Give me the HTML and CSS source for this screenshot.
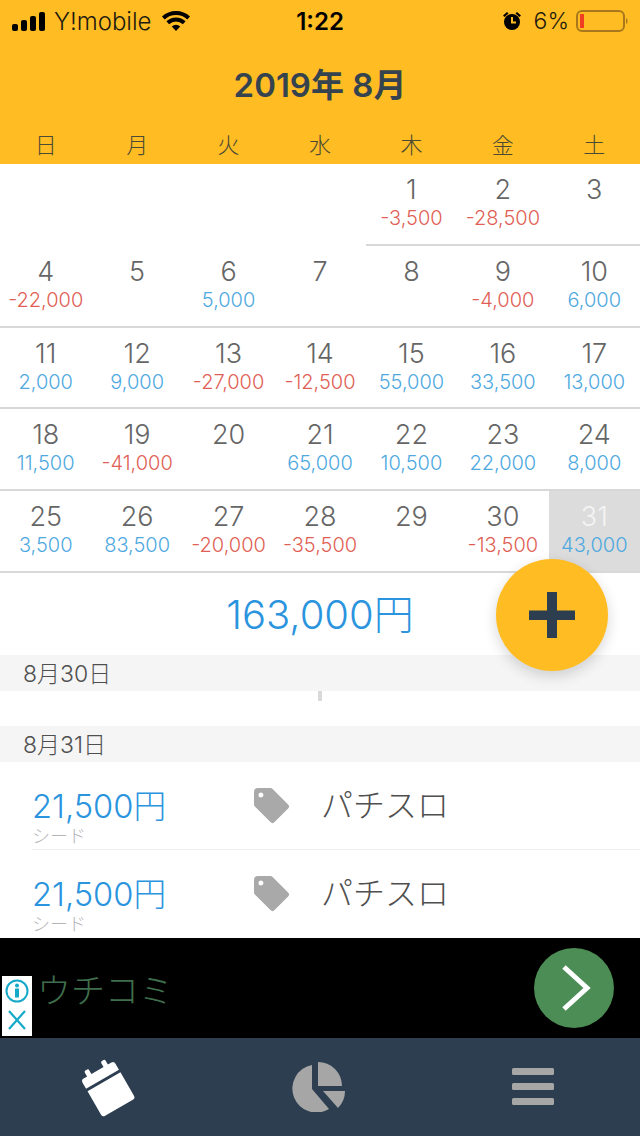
FILE: index.html
```html
<!DOCTYPE html>
<html lang="ja">
<head>
<meta charset="utf-8">
<title>Calendar</title>
<link rel="stylesheet" href="styles.css">
</head>
<body>
<div class="app">
  <header class="top">
    <div class="status">
      <div class="status-left">
        <svg class="signal" width="36" height="20" viewBox="0 0 36 20"><rect x="0" y="13" width="6" height="7" rx="2"/><rect x="9" y="9" width="6" height="11" rx="2"/><rect x="18" y="5" width="6" height="15" rx="2"/><rect x="27" y="1" width="6" height="19" rx="2"/></svg>
        <span class="carrier">Y!mobile</span>
        <svg class="wifi" width="28" height="20" viewBox="0 0 28 20"><path d="M14 20l-4.200-4.600a6 6 0 0 1 8.400 0z"/><path d="M14 6.500a14 14 0 0 1 9.600 3.800l-2.700 3a10 10 0 0 0-13.800 0l-2.700-3A14 14 0 0 1 14 6.500z"/><path d="M14 0a20.500 20.500 0 0 1 14 5.500l-2.700 3a16.500 16.500 0 0 0-22.600 0L0 5.500A20.500 20.500 0 0 1 14 0z"/></svg>
      </div>
      <div class="clock">1:22</div>
      <div class="status-right">
        <svg class="alarm" width="20" height="20" viewBox="0 0 20 20"><circle cx="10" cy="11" r="8"/><path d="M1 4.500L5 1l1.500 1.500-4 3.500zM19 4.500L15 1l-1.500 1.500 4 3.500z"/><path d="M10 6v5.500h4" fill="none" stroke="#ffbc23" stroke-width="2"/></svg>
        <span class="pct">6%</span>
        <svg class="battery" width="52" height="26" viewBox="0 0 52 26"><rect x="1" y="3" width="47" height="20" rx="5" fill="none" stroke="#a9781d" stroke-width="2"/><rect x="4" y="6" width="4" height="14" fill="#ef3e24"/><path d="M50 10c2 .5 2 5.500 0 6z" fill="#a9781d"/></svg>
      </div>
    </div>
    <h1 class="month">2019年 8月</h1>
    <div class="weekdays">
      <span>日</span><span>月</span><span>火</span><span>水</span><span>木</span><span>金</span><span>土</span>
    </div>
  </header>

  <section class="calendar">
    <div class="week first">
      <div class="day"></div><div class="day"></div><div class="day"></div><div class="day"></div>
      <div class="day ruled"><b>1</b><i class="neg">-3,500</i></div>
      <div class="day ruled"><b>2</b><i class="neg">-28,500</i></div>
      <div class="day ruled"><b>3</b></div>
    </div>
    <div class="week">
      <div class="day"><b>4</b><i class="neg">-22,000</i></div>
      <div class="day"><b>5</b></div>
      <div class="day"><b>6</b><i class="pos">5,000</i></div>
      <div class="day"><b>7</b></div>
      <div class="day"><b>8</b></div>
      <div class="day"><b>9</b><i class="neg">-4,000</i></div>
      <div class="day"><b>10</b><i class="pos">6,000</i></div>
    </div>
    <div class="week">
      <div class="day"><b>11</b><i class="pos">2,000</i></div>
      <div class="day"><b>12</b><i class="pos">9,000</i></div>
      <div class="day"><b>13</b><i class="neg">-27,000</i></div>
      <div class="day"><b>14</b><i class="neg">-12,500</i></div>
      <div class="day"><b>15</b><i class="pos">55,000</i></div>
      <div class="day"><b>16</b><i class="pos">33,500</i></div>
      <div class="day"><b>17</b><i class="pos">13,000</i></div>
    </div>
    <div class="week">
      <div class="day"><b>18</b><i class="pos">11,500</i></div>
      <div class="day"><b>19</b><i class="neg">-41,000</i></div>
      <div class="day"><b>20</b></div>
      <div class="day"><b>21</b><i class="pos">65,000</i></div>
      <div class="day"><b>22</b><i class="pos">10,500</i></div>
      <div class="day"><b>23</b><i class="pos">22,000</i></div>
      <div class="day"><b>24</b><i class="pos">8,000</i></div>
    </div>
    <div class="week">
      <div class="day"><b>25</b><i class="pos">3,500</i></div>
      <div class="day"><b>26</b><i class="pos">83,500</i></div>
      <div class="day"><b>27</b><i class="neg">-20,000</i></div>
      <div class="day"><b>28</b><i class="neg">-35,500</i></div>
      <div class="day"><b>29</b></div>
      <div class="day"><b>30</b><i class="neg">-13,500</i></div>
      <div class="day selected"><b>31</b><i class="pos">43,000</i></div>
    </div>
  </section>

  <div class="total">163,000円</div>
  <button class="fab" type="button" aria-label="add">
    <svg width="46" height="46" viewBox="0 0 46 46"><path d="M18 0h10v18.500H46v9.500H28V46H18V28H0v-9.500h18z"/></svg>
  </button>

  <div class="date-head">8月30日</div>
  <div class="empty-day"><span class="tick"></span></div>
  <div class="date-head">8月31日</div>

  <div class="entries">
    <div class="entry">
      <div class="amount-col"><div class="amount">21,500円</div><div class="place">シード</div></div>
      <svg class="tag" width="36" height="36" viewBox="0 0 36 36"><path d="M4 0h12.500a3 3 0 0 1 2.100.900l15.500 15.500a3 3 0 0 1 0 4.200L20.600 34.100a3 3 0 0 1-4.200 0L.9 18.600A3 3 0 0 1 0 16.500V4a4 4 0 0 1 4-4zm3 4.500a2.500 2.500 0 1 0 0 5 2.500 2.500 0 0 0 0-5z" fill-rule="evenodd"/></svg>
      <div class="category">パチスロ</div>
    </div>
    <div class="entry">
      <div class="amount-col"><div class="amount">21,500円</div><div class="place">シード</div></div>
      <svg class="tag" width="36" height="36" viewBox="0 0 36 36"><path d="M4 0h12.500a3 3 0 0 1 2.100.900l15.500 15.500a3 3 0 0 1 0 4.200L20.600 34.100a3 3 0 0 1-4.200 0L.9 18.600A3 3 0 0 1 0 16.500V4a4 4 0 0 1 4-4zm3 4.500a2.500 2.500 0 1 0 0 5 2.500 2.500 0 0 0 0-5z" fill-rule="evenodd"/></svg>
      <div class="category">パチスロ</div>
    </div>
  </div>

  <aside class="ad">
    <div class="ad-badge">
      <svg width="24" height="30" viewBox="0 0 24 30"><circle cx="12" cy="15" r="10.500" fill="none" stroke="#16a9c8" stroke-width="2"/><rect x="10" y="12.500" width="4" height="9" fill="#16a9c8"/><circle cx="12" cy="9.500" r="2" fill="#16a9c8"/></svg>
      <svg width="24" height="28" viewBox="0 0 24 28"><path d="M4 5l16 18M20 5L4 23" fill="none" stroke="#16a9c8" stroke-width="2.200"/></svg>
    </div>
    <div class="ad-text">ウチコミ</div>
    <div class="ad-go">
      <svg width="30" height="46" viewBox="0 0 30 46"><path d="M3 2l23 21L3 44" fill="none" stroke="#fff" stroke-width="5"/></svg>
    </div>
  </aside>

  <nav class="tabbar">
    <svg class="tab-cal" width="56" height="62" viewBox="0 0 56 62"><g transform="rotate(-30 28 31)"><path d="M9 15a3 3 0 0 1 3-3h32a3 3 0 0 1 3 3v7H9z" fill="#fff"/><rect x="16" y="6" width="5" height="9" rx="1.500" fill="#fff"/><rect x="35" y="6" width="5" height="9" rx="1.500" fill="#fff"/><path d="M9 25h38v27a3 3 0 0 1-3 3H12a3 3 0 0 1-3-3z" fill="#fff"/></g></svg>
    <svg class="tab-pie" width="54" height="50" viewBox="0 0 54 50"><path d="M20 3v24l17 20A24 24 0 1 1 20 3z" fill="#a6a6a6"/><path d="M26 0a24 24 0 0 1 24 24H26z" fill="#a6a6a6"/><path d="M31 29h22a24 24 0 0 1-7 17z" fill="#a6a6a6"/></svg>
    <svg width="44" height="40" viewBox="0 0 44 40"><rect x="1" y="1" width="42" height="7" rx="1.500" fill="#a6a6a6"/><rect x="1" y="16" width="42" height="7" rx="1.500" fill="#a6a6a6"/><rect x="1" y="31" width="42" height="7" rx="1.500" fill="#a6a6a6"/></svg>
  </nav>
</div>
</body>
</html>
```
FILE: styles.css
```css
* { box-sizing: border-box; }
html, body { margin: 0; padding: 0; background: #fff; }
body { font-family: Inter, "Noto Sans CJK JP", sans-serif; }
.app { position: relative; width: 640px; height: 1136px; overflow: hidden; display: flex; flex-direction: column; }

.top { height: 164px; background: #ffbc23; display: flex; flex-direction: column; }
.status { height: 42px; padding: 0 12px; display: grid; grid-template-columns: 1fr auto 1fr; align-items: center; color: #000; }
.status-left { display: flex; align-items: center; gap: 6px; }
.status-right { display: flex; align-items: center; justify-content: flex-end; gap: 12px; }
.carrier { font-size: 24px; font-weight: 300; color: #1d1a10; }
.wifi { margin-left: 5px; }
.clock { font-size: 24px; font-weight: 600; }
.pct { font-size: 23px; font-weight: 300; color: #1d1a10; margin-right: -5px; }
.month { margin: 0; height: 84px; padding-top: 25px; text-align: center; font-size: 33px; font-weight: 600; line-height: 36px; color: #35434f; }
.weekdays { display: grid; grid-template-columns: repeat(7, 1fr); margin-top: 4px; font-size: 22px; font-weight: 300; line-height: 30px; color: #4b4a35; text-align: center; }

.calendar { height: 409px; display: flex; flex-direction: column; }
.week { flex: 1; display: grid; grid-template-columns: repeat(7, 1fr); border-bottom: 2px solid #d8d8d8; }
.week.first { border-bottom-color: transparent; }
.day { display: flex; flex-direction: column; align-items: center; padding-top: 10px; min-width: 0; }
.day.ruled { border-bottom: 2px solid #d8d8d8; margin-bottom: -2px; }
.day b { font-weight: 300; font-size: 27px; line-height: 32px; color: #666; }
.day i { font-style: normal; font-weight: 300; font-size: 20px; line-height: 22px; margin-top: 1px; }
.neg { color: #df5f56; }
.pos { color: #4fa9df; }
.selected { background: #dcdcdc; }
.selected b { color: #f4f4f4; }

.total { height: 82px; padding-bottom: 4px; display: flex; align-items: center; justify-content: center; font-size: 40px; font-weight: 300; color: #2b94de; }
.fab { position: absolute; left: 496px; top: 559px; width: 112px; height: 112px; padding: 0; border: 0; border-radius: 50%; background: #ffbc23; box-shadow: 0 5px 14px rgba(0, 0, 0, .16); display: flex; align-items: center; justify-content: center; }
.fab svg { fill: #2c3e50; }

.date-head { height: 36px; background: #f5f5f5; padding-left: 23px; font-size: 23px; font-weight: 300; line-height: 38px; color: #4f4f4f; }
.empty-day { height: 35px; display: flex; justify-content: center; }
.tick { width: 4px; height: 10px; background: #d9d9d9; }

.entries { flex: 1; }
.entry { height: 88px; margin-left: 32px; display: flex; align-items: flex-start; border-bottom: 1px solid #eee; }
.entry:last-child { border-bottom: 0; }
.amount-col { width: 222px; padding-top: 25px; }
.amount { font-size: 32.700px; font-weight: 300; line-height: 38px; color: #2b94de; }
.place { font-size: 18px; font-weight: 300; line-height: 24px; color: #b5b5b5; }
.tag { margin-top: 26px; fill: #a9a9a9; }
.category { margin-left: 31px; padding-top: 24px; font-size: 32px; font-weight: 300; line-height: 40px; color: #4f4f4f; }

.ad { height: 100px; background: #000; display: flex; align-items: center; position: relative; }
.ad-badge { position: absolute; left: 2px; top: 38px; width: 30px; height: 60px; background: #fff; display: flex; flex-direction: column; align-items: center; }
.ad-text { margin-left: 37px; font-size: 34px; font-weight: 300; color: #3f6f4c; }
.ad-go { position: absolute; left: 534px; top: 10px; width: 80px; height: 80px; border-radius: 50%; background: #4c8c55; display: flex; align-items: center; justify-content: center; padding-left: 3px; }

.tabbar { height: 98px; background: #2c3e50; display: grid; grid-template-columns: 1fr 1fr 1fr; align-items: center; justify-items: center; }
.tab-pie { margin-left: -2px; }
```
